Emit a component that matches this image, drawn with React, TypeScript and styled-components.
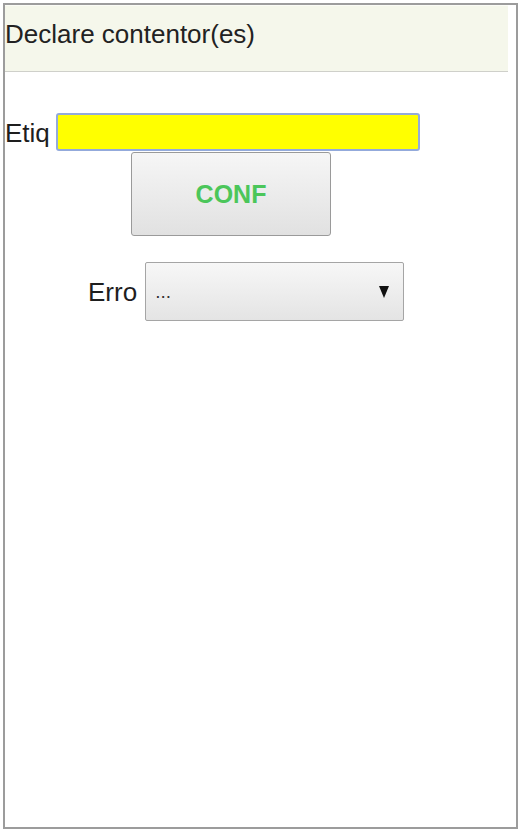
import styled, { createGlobalStyle } from "styled-components"

const GlobalStyle = createGlobalStyle`
  html, body {
    margin: 0;
    padding: 0;
    background: #ffffff;
  }
  body {
    font-family: "Liberation Sans", Arial, sans-serif;
    color: #222222;
  }
`

const Frame = styled.div`
  box-sizing: border-box;
  margin: 3px;
  width: 515px;
  height: 826px;
  border: 2px solid #9c9c9c;
  background: #ffffff;
`

const Header = styled.div`
  box-sizing: border-box;
  height: 67px;
  margin-right: 8px;
  padding-top: 13px;
  border-top: 1px solid #fbfcf6;
  border-bottom: 1px solid #cfd0ca;
  background: #f5f7eb;
  font-size: 26px;
  color: #222222;
`

const Form = styled.div`
  display: flex;
  flex-direction: column;
  padding-top: 41px;
`

const Row = styled.div<{ $indent?: number; $gap: number }>`
  display: flex;
  align-items: ${(p) => (p.$indent ? "center" : "flex-end")};
  gap: ${(p) => p.$gap}px;
  padding-left: ${(p) => p.$indent ?? 0}px;
`

const Label = styled.label<{ $lift?: number }>`
  font-size: 26px;
  line-height: 30px;
  color: #1e1e1e;
  margin-bottom: ${(p) => p.$lift ?? 0}px;
`

const TextInput = styled.input`
  box-sizing: border-box;
  width: 364px;
  height: 38px;
  border: 2px solid #93aadb;
  border-radius: 3px;
  background: #ffff00;
  outline: none;
  padding: 0 6px;
  font-size: 20px;
`

const ConfButton = styled.button`
  box-sizing: border-box;
  margin: 1px 0 0 126px;
  width: 200px;
  height: 84px;
  border: 1px solid #9a9a9a;
  border-radius: 3px;
  background: linear-gradient(#f6f6f6, #e1e1e1);
  color: #4bc65a;
  font-family: "Liberation Sans", Arial, sans-serif;
  font-size: 25px;
  font-weight: bold;
  cursor: pointer;
`

const SelectRow = styled(Row)`
  margin-top: 26px;
`

const SelectWrap = styled.div`
  position: relative;
  width: 259px;
  height: 59px;
`

const Select = styled.select`
  box-sizing: border-box;
  appearance: none;
  width: 100%;
  height: 100%;
  border: 1px solid #a5a5a5;
  border-radius: 2px;
  background: linear-gradient(#f7f7f7, #e4e4e4);
  padding: 0 30px 0 9px;
  font-family: "Liberation Sans", Arial, sans-serif;
  font-size: 19px;
  color: #333333;
  outline: none;
`

const Arrow = styled.svg`
  position: absolute;
  right: 15px;
  top: 24px;
  pointer-events: none;
`

export default function App() {
  return (
    <>
      <GlobalStyle />
      <Frame>
        <Header>Declare contentor(es)</Header>
        <Form>
          <Row $gap={6}>
            <Label htmlFor="etiq" $lift={3}>
              Etiq
            </Label>
            <TextInput id="etiq" />
          </Row>
          <div>
            <ConfButton>CONF</ConfButton>
          </div>
          <SelectRow $indent={83} $gap={8}>
            <Label htmlFor="erro">Erro</Label>
            <SelectWrap>
              <Select id="erro" defaultValue="">
                <option value="">...</option>
              </Select>
              <Arrow width="10" height="12" viewBox="0 0 10 12">
                <polygon points="0,0 10,0 5,12" fill="#111111" />
              </Arrow>
            </SelectWrap>
          </SelectRow>
        </Form>
      </Frame>
    </>
  )
}
